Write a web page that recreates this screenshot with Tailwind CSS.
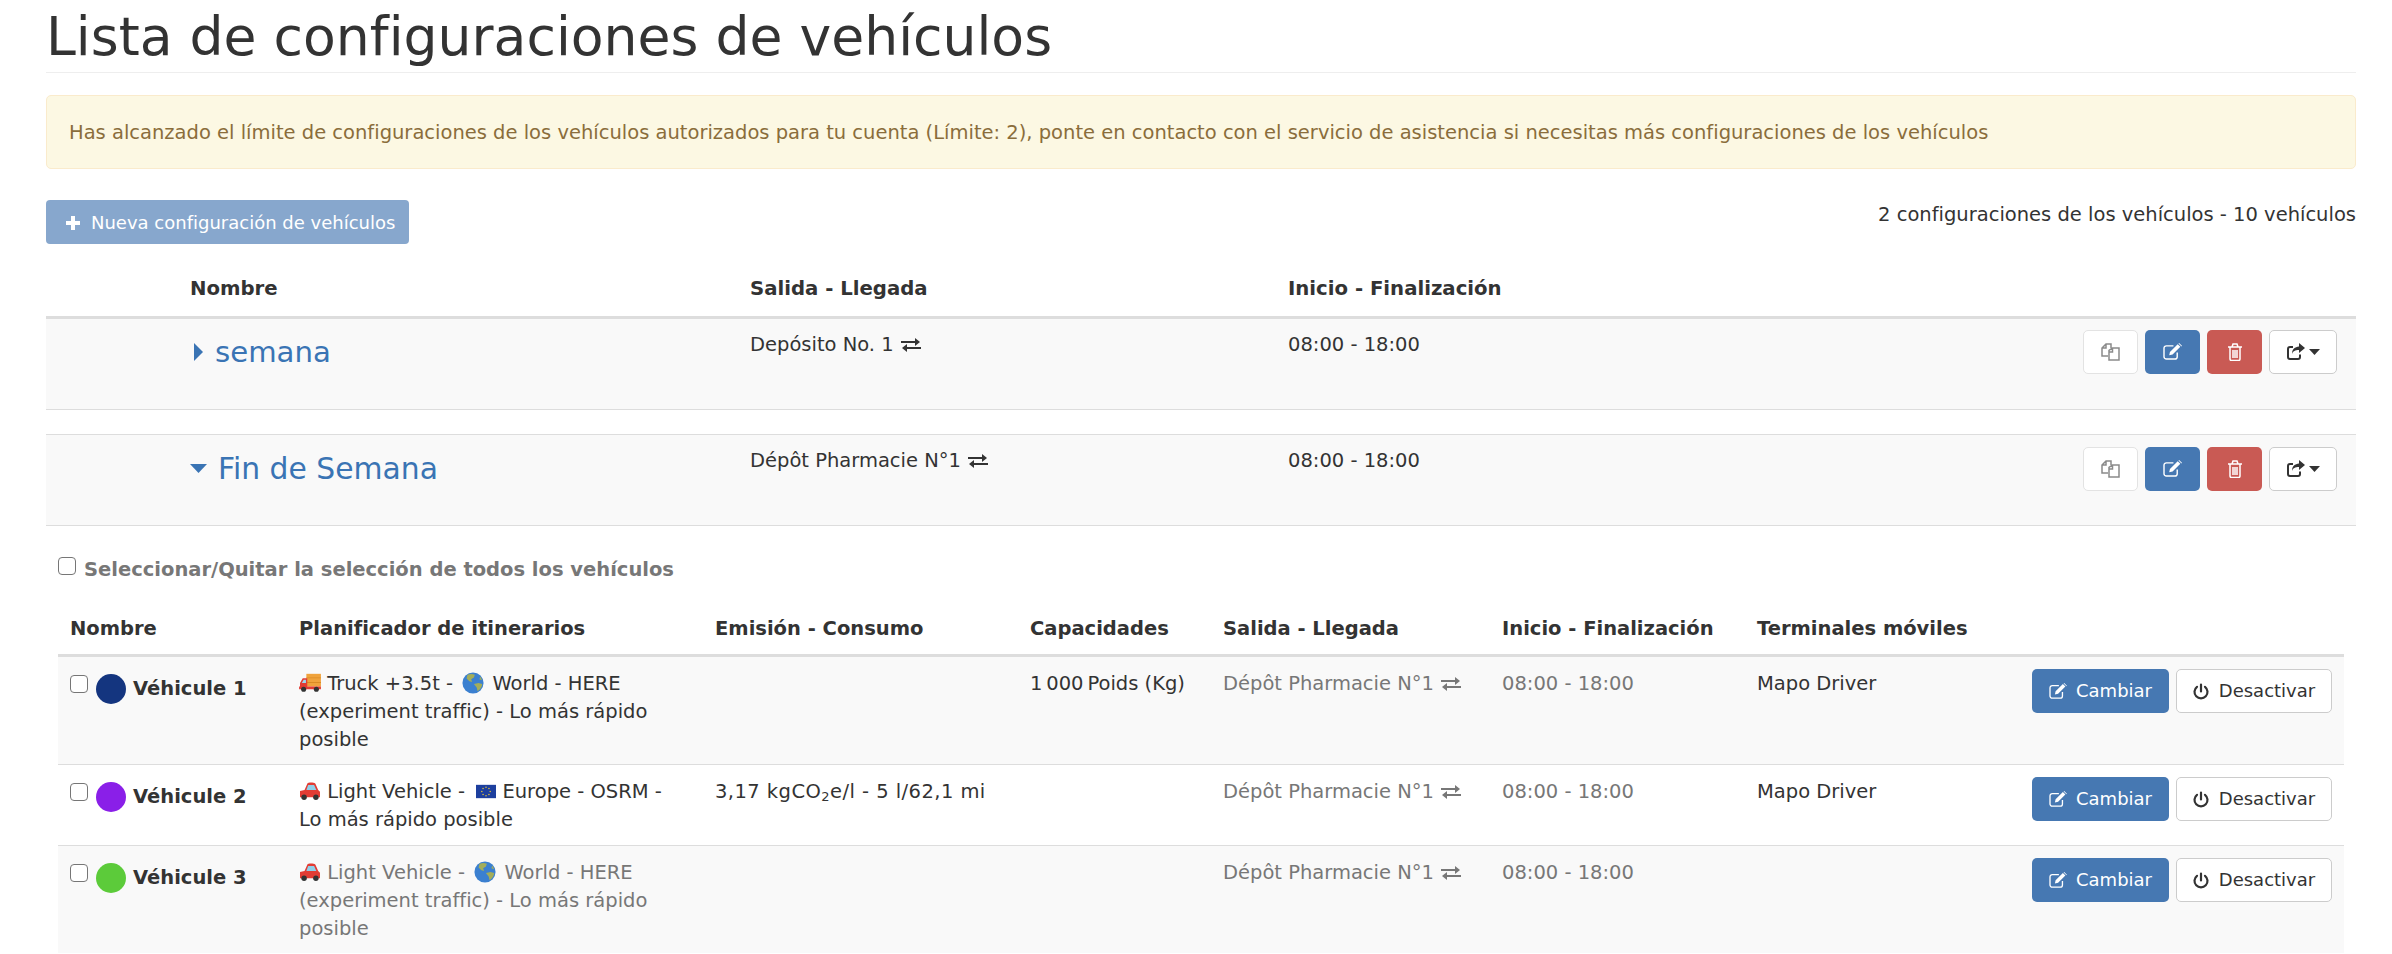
<!DOCTYPE html>
<html lang="es">
<head>
  <meta charset="UTF-8">
  <title>Lista de configuraciones de vehículos</title>
  <script src="https://cdn.jsdelivr.net/npm/@tailwindcss/browser@4"></script>
</head>
<body class="bg-white text-[#333] font-['DejaVu_Sans',sans-serif] text-[19.5px] leading-[28px] h-[954px] overflow-hidden">
  <!-- Icons -->
  <svg class="hidden">
    <symbol id="i-exchange" viewBox="0 0 20 14"><path fill="currentColor" d="M0 3h14V0l5 4-5 4V5H0zM20 9H6V6l-5 4 5 4v-3h14z" /></symbol>
    <symbol id="i-edit" viewBox="0 0 20 18"><path fill="none" stroke="currentColor" stroke-width="1.5" d="M15 10v4.500a2.500 2.500 0 0 1-2.500 2.500H3.500A2.500 2.500 0 0 1 1 14.500v-9A2.500 2.500 0 0 1 3.500 3H11" /><path fill="currentColor" d="M6.500 13l.8-3.600L15.500 1.200l2.800 2.800-8.200 8.200zM16.300.5l.7-.5 3 3-.5.700z" /></symbol>
    <symbol id="i-copy" viewBox="0 0 19 18"><path fill="none" stroke="currentColor" stroke-width="1.500" d="M7 13H1V5l4-4h5v4M5 1v4H1M8 17V7.500L11.500 5H18v12zM11.500 5v4H8" /></symbol>
    <symbol id="i-trash" viewBox="0 0 14 18"><path fill="none" stroke="currentColor" stroke-width="1.500" d="M0 4h14M4 4l1-3h4l1 3M2 4v12a1.500 1.500 0 0 0 1.500 1.500h7A1.500 1.500 0 0 0 12 16V4M5 7v8M7 7v8M9 7v8" /></symbol>
    <symbol id="i-share" viewBox="0 0 18 17"><path fill="none" stroke="currentColor" stroke-width="2" d="M13 11.500V14a2 2 0 0 1-2 2H3a2 2 0 0 1-2-2V6a2 2 0 0 1 2-2h3" /><path fill="currentColor" d="M12 0l6 5-6 5V7C8 7 6 8 5 11c0-5 3-7 7-7.500z" /></symbol>
    <symbol id="i-power" viewBox="0 0 16 17"><path fill="none" stroke="currentColor" stroke-width="2.200" stroke-linecap="round" d="M8 1.500v7M4 3.800a6.500 6.500 0 1 0 8 0" /></symbol>
    <symbol id="i-truck" viewBox="0 0 24 22"><rect x="8" y="2" width="16" height="14" fill="#f0a33c" /><path fill="#d98a25" d="M8 6h16v1H8zM8 11h16v1H8z" /><path fill="#e23c34" d="M1 16v-4l3-5h5v9zM0 16h24v3H0z" /><path fill="#9fd6ee" d="M3 12l2-3.500h2.500V12z" /><circle cx="5" cy="19" r="2.800" fill="#333" /><circle cx="19" cy="19" r="2.800" fill="#333" /></symbol>
    <symbol id="i-car" viewBox="0 0 24 22"><path fill="#e23c34" d="M1 12l5-1 3-7c1-1.500 7-1.500 9 0l3 7 2 2v6H1z" /><path fill="#8fd0ea" d="M8 11l2-5.500h6.500L19 11z" /><circle cx="5.500" cy="19" r="3" fill="#333" /><circle cx="18.500" cy="19" r="3" fill="#333" /></symbol>
    <symbol id="i-globe" viewBox="0 0 24 24"><circle cx="12" cy="12" r="11.500" fill="#3b80d0" /><path fill="#a3ad5a" d="M6 3c3-1.500 6-1 8 0l-1 3-3 2 1 3-3-1-3-3zM13 13l5-1 4 1c0 3-2 6-5 8l-1-4zM20 5l2 4-3-1z" /></symbol>
    <symbol id="i-eu" viewBox="0 0 24 18"><rect y="1" width="24" height="16" fill="#1d3f9e" /><g fill="#e8c63a"><circle cx="12" cy="4" r=".9" /><circle cx="12" cy="14" r=".9" /><circle cx="7" cy="9" r=".9" /><circle cx="17" cy="9" r=".9" /><circle cx="8.500" cy="5.500" r=".9" /><circle cx="15.500" cy="5.500" r=".9" /><circle cx="8.500" cy="12.500" r=".9" /><circle cx="15.500" cy="12.500" r=".9" /></g></symbol>
  </svg>

  <main class="mx-[46px] w-[2310px]">
    <h1 class="h-[73px] border-b border-[#eee] text-[53.6px] leading-[74px] font-normal">Lista de configuraciones de vehículos</h1>

    <div class="mt-[22px] h-[74px] px-[22px] pt-[2px] flex items-center bg-[#fcf8e3] border border-[#faebcc] rounded-[5px] text-[#8a6d3b]">
      Has alcanzado el límite de configuraciones de los vehículos autorizados para tu cuenta (Límite: 2), ponte en contacto con el servicio de asistencia si necesitas más configuraciones de los vehículos
    </div>

    <div class="mt-[31px] flex justify-between items-start">
      <button class="h-[44px] w-[363px] pl-[20px] pt-[1px] flex items-center gap-[11px] bg-[#87a7cd] text-white rounded-[4px] text-[18px]">
        <svg class="w-[14px] h-[14px]" viewBox="0 0 14 14"><path fill="currentColor" d="M5 0h4v5h5v4H9v5H5V9H0V5h5z" /></svg>
        Nueva configuración de vehículos
      </button>
      <p class="pt-[1px]">2 configuraciones de los vehículos - 10 vehículos</p>
    </div>

    <!-- Configurations -->
    <table class="mt-[26px] w-full table-fixed border-collapse">
      <thead>
        <tr class="h-[47px] border-b-[3px] border-[#ddd] text-left align-top text-[19.7px]">
          <th class="w-[144px]"></th>
          <th class="w-[560px] pt-[5px] font-bold">Nombre</th>
          <th class="w-[538px] pt-[5px] font-bold">Salida - Llegada</th>
          <th class="pt-[5px] font-bold">Inicio - Finalización</th>
          <th class="w-[340px]"></th>
        </tr>
      </thead>
      <tbody>
        <tr class="h-[92px] bg-[#f9f9f9] border-b border-[#ddd] align-top">
          <td></td>
          <td class="pt-[13px]">
            <a class="flex items-center gap-[12px] text-[#3a74b4] text-[29.2px] leading-[40px]">
              <svg class="w-[9px] h-[18px] ml-[4px]" viewBox="0 0 9 18"><path fill="currentColor" d="M0 0l9 9-9 9z" /></svg>
              semana
            </a>
          </td>
          <td class="pt-[12px]">
            <span class="flex items-center gap-[7px]">Depósito No. 1 <svg class="w-[20px] h-[14px]"><use href="#i-exchange" /></svg></span>
          </td>
          <td class="pt-[12px]">08:00 - 18:00</td>
          <td class="pt-[11px] pr-[19px]">
            <div class="flex justify-end gap-[7px]">
              <button class="w-[55px] h-[44px] flex items-center justify-center bg-white border border-[#e3e3e3] rounded-[5px] text-[#8a8a8a]"><svg class="w-[19px] h-[18px]"><use href="#i-copy" /></svg></button>
              <button class="w-[55px] h-[44px] flex items-center justify-center bg-[#4678b2] rounded-[5px] text-white"><svg class="w-[19px] h-[17px]"><use href="#i-edit" /></svg></button>
              <button class="w-[55px] h-[44px] flex items-center justify-center bg-[#c95a54] rounded-[5px] text-white"><svg class="w-[14px] h-[18px]"><use href="#i-trash" /></svg></button>
              <button class="w-[68px] h-[44px] flex items-center justify-center gap-[4px] bg-white border border-[#ccc] rounded-[5px]">
                <svg class="w-[18px] h-[17px]"><use href="#i-share" /></svg>
                <svg class="w-[11px] h-[6px]" viewBox="0 0 11 6"><path fill="currentColor" d="M0 0h11L5.500 6z" /></svg>
              </button>
            </div>
          </td>
        </tr>
        <tr class="h-[25px] border-b border-[#ddd]"><td colspan="5"></td></tr>
        <tr class="h-[91px] bg-[#f9f9f9] border-b border-[#ddd] align-top">
          <td></td>
          <td class="pt-[14px]">
            <a class="flex items-center gap-[11px] text-[#3a74b4] text-[29.8px] leading-[40px]">
              <svg class="w-[17px] h-[9px]" viewBox="0 0 17 9"><path fill="currentColor" d="M0 0h17L8.500 9z" /></svg>
              Fin de Semana
            </a>
          </td>
          <td class="pt-[12px]">
            <span class="flex items-center gap-[7px]">Dépôt Pharmacie N°1 <svg class="w-[20px] h-[14px]"><use href="#i-exchange" /></svg></span>
          </td>
          <td class="pt-[12px]">08:00 - 18:00</td>
          <td class="pt-[12px] pr-[19px]">
            <div class="flex justify-end gap-[7px]">
              <button class="w-[55px] h-[44px] flex items-center justify-center bg-white border border-[#e3e3e3] rounded-[5px] text-[#8a8a8a]"><svg class="w-[19px] h-[18px]"><use href="#i-copy" /></svg></button>
              <button class="w-[55px] h-[44px] flex items-center justify-center bg-[#4678b2] rounded-[5px] text-white"><svg class="w-[19px] h-[17px]"><use href="#i-edit" /></svg></button>
              <button class="w-[55px] h-[44px] flex items-center justify-center bg-[#c95a54] rounded-[5px] text-white"><svg class="w-[14px] h-[18px]"><use href="#i-trash" /></svg></button>
              <button class="w-[68px] h-[44px] flex items-center justify-center gap-[4px] bg-white border border-[#ccc] rounded-[5px]">
                <svg class="w-[18px] h-[17px]"><use href="#i-share" /></svg>
                <svg class="w-[11px] h-[6px]" viewBox="0 0 11 6"><path fill="currentColor" d="M0 0h11L5.500 6z" /></svg>
              </button>
            </div>
          </td>
        </tr>
      </tbody>
    </table>

    <!-- Vehicles of the open configuration -->
    <section class="mx-[12px]">
      <label class="mt-[31px] flex items-start gap-[8px] font-bold text-[#777]">
        <input type="checkbox" class="appearance-none w-[18px] h-[18px] bg-white border border-[#767676] rounded-[4px]">
        <span class="mt-[-1px]">Seleccionar/Quitar la selección de todos los vehículos</span>
      </label>

      <table class="mt-[23px] w-full table-fixed border-collapse">
        <thead>
          <tr class="h-[49px] border-b-[3px] border-[#ddd] text-left">
            <th class="w-[241px] pl-[12px] pb-[2px] font-bold">Nombre</th>
            <th class="w-[416px] pb-[2px] font-bold">Planificador de itinerarios</th>
            <th class="w-[315px] pb-[2px] font-bold">Emisión - Consumo</th>
            <th class="w-[193px] pb-[2px] font-bold">Capacidades</th>
            <th class="w-[279px] pb-[2px] font-bold">Salida - Llegada</th>
            <th class="w-[255px] pb-[2px] font-bold">Inicio - Finalización</th>
            <th class="pb-[2px] font-bold">Terminales móviles</th>
            <th class="w-[318px]"></th>
          </tr>
        </thead>
        <tbody>
          <tr class="bg-[#f9f9f9] border-b border-[#ddd] align-top">
            <td class="pl-[12px] pt-[11px] pb-[12px]">
              <div class="flex items-start font-bold">
                <input type="checkbox" class="appearance-none mt-[7px] w-[18px] h-[18px] bg-white border border-[#767676] rounded-[4px]">
                <span class="ml-[8px] mt-[6px] w-[30px] h-[30px] rounded-full bg-[#14357f]"></span>
                <span class="ml-[7px] mt-[7px]">Véhicule 1</span>
              </div>
            </td>
            <td class="pt-[13px] pb-[10px] pr-[30px]"><svg class="inline-block w-[22px] h-[20px] align-[-2px]"><use href="#i-truck" /></svg> Truck +3.5t - <svg class="inline-block ml-[3px] mr-[2px] w-[22px] h-[22px] align-[-4px]"><use href="#i-globe" /></svg> World - HERE (experiment traffic) - Lo más rápido posible</td>
            <td class="pt-[13px]"></td>
            <td class="pt-[13px]">1&#8239;000&#8239;Poids (Kg)</td>
            <td class="pt-[13px] text-[#777]"><span class="flex items-center gap-[7px]">Dépôt Pharmacie N°1 <svg class="w-[20px] h-[14px]"><use href="#i-exchange" /></svg></span></td>
            <td class="pt-[13px] text-[#777]">08:00 - 18:00</td>
            <td class="pt-[13px]">Mapo Driver</td>
            <td class="pt-[12px] pr-[12px]">
              <div class="flex justify-end gap-[7px]">
                <button class="w-[137px] h-[44px] flex items-center justify-center gap-[9px] bg-[#4678b2] rounded-[5px] text-white text-[18px]"><svg class="w-[18px] h-[16px]"><use href="#i-edit" /></svg>Cambiar</button>
                <button class="w-[156px] h-[44px] flex items-center justify-center gap-[10px] bg-white border border-[#ccc] rounded-[5px] text-[18px]"><svg class="w-[16px] h-[17px]"><use href="#i-power" /></svg>Desactivar</button>
              </div>
            </td>
          </tr>
          <tr class="border-b border-[#ddd] align-top">
            <td class="pl-[12px] pt-[11px] pb-[12px]">
              <div class="flex items-start font-bold">
                <input type="checkbox" class="appearance-none mt-[7px] w-[18px] h-[18px] bg-white border border-[#767676] rounded-[4px]">
                <span class="ml-[8px] mt-[6px] w-[30px] h-[30px] rounded-full bg-[#8a1fe8]"></span>
                <span class="ml-[7px] mt-[7px]">Véhicule 2</span>
              </div>
            </td>
            <td class="pt-[13px] pb-[11px] pr-[30px]"><svg class="inline-block w-[22px] h-[20px] align-[-2px]"><use href="#i-car" /></svg> Light Vehicle - <svg class="inline-block ml-[5px] w-[20px] h-[15px] align-[-1px]"><use href="#i-eu" /></svg> Europe - OSRM - Lo más rápido posible</td>
            <td class="pt-[13px] tracking-[0.45px]">3,17 kgCO<sub class="text-[13px]">2</sub>e/l - 5 l/62,1 mi</td>
            <td class="pt-[13px]"></td>
            <td class="pt-[13px] text-[#777]"><span class="flex items-center gap-[7px]">Dépôt Pharmacie N°1 <svg class="w-[20px] h-[14px]"><use href="#i-exchange" /></svg></span></td>
            <td class="pt-[13px] text-[#777]">08:00 - 18:00</td>
            <td class="pt-[13px]">Mapo Driver</td>
            <td class="pt-[12px] pr-[12px]">
              <div class="flex justify-end gap-[7px]">
                <button class="w-[137px] h-[44px] flex items-center justify-center gap-[9px] bg-[#4678b2] rounded-[5px] text-white text-[18px]"><svg class="w-[18px] h-[16px]"><use href="#i-edit" /></svg>Cambiar</button>
                <button class="w-[156px] h-[44px] flex items-center justify-center gap-[10px] bg-white border border-[#ccc] rounded-[5px] text-[18px]"><svg class="w-[16px] h-[17px]"><use href="#i-power" /></svg>Desactivar</button>
              </div>
            </td>
          </tr>
          <tr class="bg-[#f9f9f9] align-top">
            <td class="pl-[12px] pt-[11px] pb-[12px]">
              <div class="flex items-start font-bold">
                <input type="checkbox" class="appearance-none mt-[7px] w-[18px] h-[18px] bg-white border border-[#767676] rounded-[4px]">
                <span class="ml-[8px] mt-[6px] w-[30px] h-[30px] rounded-full bg-[#5ccb3a]"></span>
                <span class="ml-[7px] mt-[7px]">Véhicule 3</span>
              </div>
            </td>
            <td class="pt-[13px] pb-[10px] pr-[30px] text-[#777]"><svg class="inline-block w-[22px] h-[20px] align-[-2px]"><use href="#i-car" /></svg> Light Vehicle - <svg class="inline-block ml-[3px] mr-[2px] w-[22px] h-[22px] align-[-4px]"><use href="#i-globe" /></svg> World - HERE (experiment traffic) - Lo más rápido posible</td>
            <td class="pt-[13px]"></td>
            <td class="pt-[13px]"></td>
            <td class="pt-[13px] text-[#777]"><span class="flex items-center gap-[7px]">Dépôt Pharmacie N°1 <svg class="w-[20px] h-[14px]"><use href="#i-exchange" /></svg></span></td>
            <td class="pt-[13px] text-[#777]">08:00 - 18:00</td>
            <td class="pt-[13px]"></td>
            <td class="pt-[12px] pr-[12px]">
              <div class="flex justify-end gap-[7px]">
                <button class="w-[137px] h-[44px] flex items-center justify-center gap-[9px] bg-[#4678b2] rounded-[5px] text-white text-[18px]"><svg class="w-[18px] h-[16px]"><use href="#i-edit" /></svg>Cambiar</button>
                <button class="w-[156px] h-[44px] flex items-center justify-center gap-[10px] bg-white border border-[#ccc] rounded-[5px] text-[18px]"><svg class="w-[16px] h-[17px]"><use href="#i-power" /></svg>Desactivar</button>
              </div>
            </td>
          </tr>
        </tbody>
      </table>
    </section>
  </main>
</body>
</html>
